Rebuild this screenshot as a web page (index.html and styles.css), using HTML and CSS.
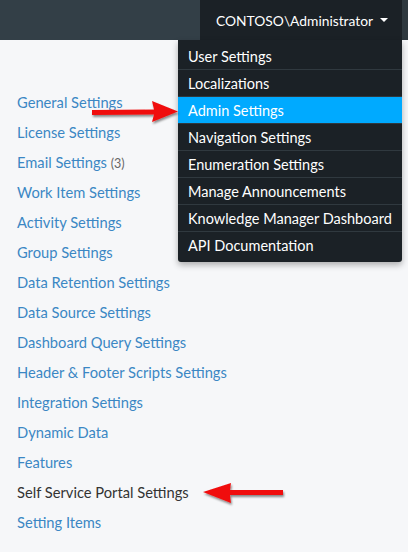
FILE: index.html
```html
<!DOCTYPE html>
<html>
<head>
<meta charset="utf-8">
<link rel="stylesheet" href="styles.css">
</head>
<body>
<header class="topbar">
  <div class="brand"></div>
  <div class="user">CONTOSO\Administrator <span class="caret"></span></div>
  <div class="edge"></div>
</header>
<ul class="menu">
  <li>User Settings</li>
  <li>Localizations</li>
  <li class="active">Admin Settings</li>
  <li>Navigation Settings</li>
  <li>Enumeration Settings</li>
  <li>Manage Announcements</li>
  <li>Knowledge Manager Dashboard</li>
  <li>API Documentation</li>
</ul>
<nav class="side">
  <a>General Settings</a>
  <a>License Settings</a>
  <a>Email Settings <span class="count">(3)</span></a>
  <a>Work Item Settings</a>
  <a>Activity Settings</a>
  <a>Group Settings</a>
  <a>Data Retention Settings</a>
  <a>Data Source Settings</a>
  <a>Dashboard Query Settings</a>
  <a>Header &amp; Footer Scripts Settings</a>
  <a>Integration Settings</a>
  <a>Dynamic Data</a>
  <a>Features</a>
  <a class="current">Self Service Portal Settings</a>
  <a>Setting Items</a>
</nav>
<svg class="arrow arrow1" width="100" height="30" viewBox="0 0 100 30">
  <defs><filter id="sh" x="-20%" y="-50%" width="140%" height="200%"><feDropShadow dx="1" dy="2" stdDeviation="1.2" flood-color="#000" flood-opacity="0.45"/></filter></defs>
  <path d="M4 12 L66 11.5 L64 3 L90 13.5 L64 24 L66 16.5 L4 17 Z" fill="#f01010" filter="url(#sh)"/>
</svg>
<svg class="arrow arrow2" width="100" height="30" viewBox="0 0 100 30">
  <defs><filter id="sh2" x="-20%" y="-50%" width="140%" height="200%"><feDropShadow dx="1" dy="2" stdDeviation="1.2" flood-color="#000" flood-opacity="0.45"/></filter></defs>
  <path d="M84 11 L31 11 L32 4 L4 13 L32 24 L31 16 L84 16 Z" fill="#f01010" filter="url(#sh2)"/>
</svg>
</body>
</html>
```
FILE: styles.css
```css
html, body {
  margin: 0;
  padding: 0;
}
body {
  width: 408px;
  height: 552px;
  background: #f6f7f9;
  font-family: Lato, "Open Sans", sans-serif;
  font-size: 14.7px;
  position: relative;
  overflow: hidden;
}
.topbar {
  display: flex;
  height: 40px;
}
.brand {
  width: 200px;
  background: #333f47;
}
.user {
  flex: 1;
  background: #1b2126;
  color: #fff;
  font-size: 13.8px;
  display: flex;
  align-items: center;
  padding-left: 16px;
  gap: 3px;
}
.caret {
  width: 0;
  height: 0;
  border-left: 4px solid transparent;
  border-right: 4px solid transparent;
  border-top: 4px solid #fff;
  margin-left: 4px;
}
.edge {
  width: 6px;
  background: #2e383e;
}
.menu {
  position: absolute;
  left: 178px;
  top: 40px;
  width: 224px;
  margin: 0;
  padding: 3px 0 4px;
  list-style: none;
  background: #1b2126;
  box-shadow: 0 3px 6px rgba(0,0,0,0.3);
  border-radius: 0 0 3px 3px;
}
.menu li {
  height: 26px;
  line-height: 27px;
  padding-left: 10px;
  color: #fff;
  font-size: 14.5px;
  border-bottom: 1px solid #30393f;
}
.menu li:last-child {
  border-bottom: none;
}
.menu li.active {
  background: #00aaff;
}
.side {
  display: flex;
  flex-direction: column;
  padding: 47px 0 0 17px;
}
.side a {
  height: 30px;
  line-height: 30px;
  color: #3b87c4;
}
.side a.current {
  color: #333;
}
.count {
  color: #666;
  font-size: 12.5px;
}
.arrow {
  position: absolute;
}
.arrow1 {
  left: 88px;
  top: 98px;
}
.arrow2 {
  left: 199px;
  top: 479px;
}
```
